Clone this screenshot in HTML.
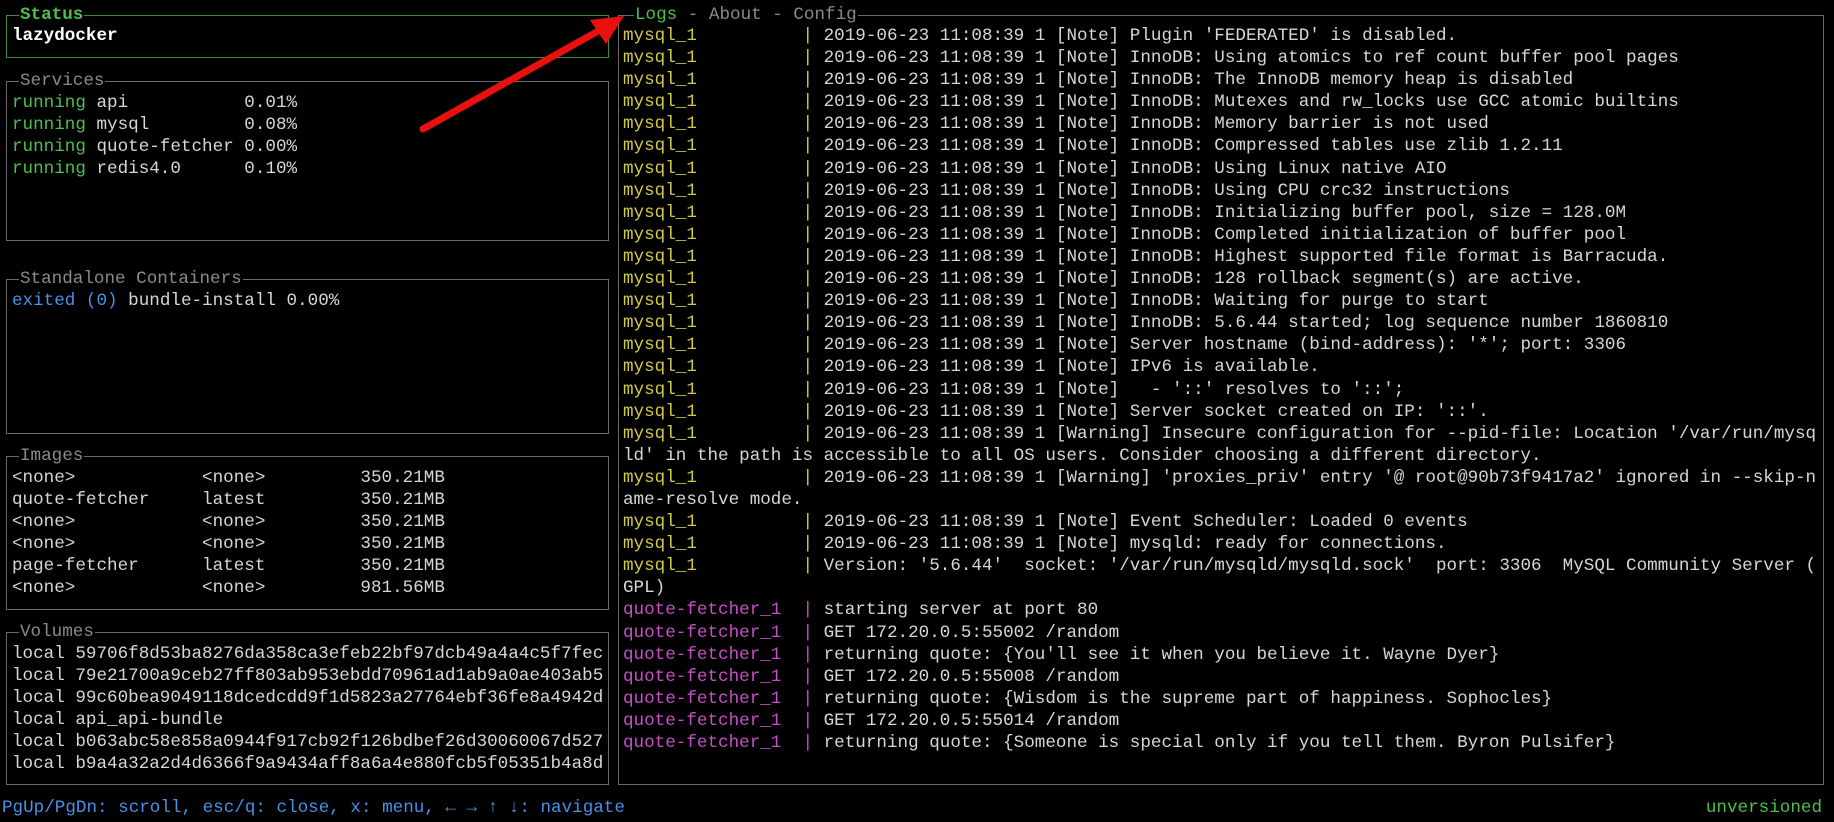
<!DOCTYPE html>
<html><head><meta charset="utf-8"><style>
html,body{margin:0;padding:0;background:#000;width:1834px;height:822px;overflow:hidden}
body{position:relative;font-family:"Liberation Mono","DejaVu Sans Mono",monospace;font-size:17.6px;color:#d6d6d6}
.box{position:absolute;border:1.5px solid #6a6a6a;box-sizing:border-box}
.t{position:absolute;top:-12px;left:12px;background:#000;line-height:22px;color:#8a8a8a;padding:0 1px}
pre{margin:0;font:inherit;line-height:22.1px;white-space:pre;position:absolute}
.g{color:#4cbf4c}.y{color:#d2c848}.m{color:#c84fc8}.b{color:#4a8fe8}.w{color:#fff;font-weight:bold}
</style></head><body>
<div class="box" style="left:6px;top:15px;width:603px;height:43px;border-color:#3f8a3f"><span class="t g" style="font-weight:bold">Status</span>
<pre class="w" style="left:5px;top:9px">lazydocker</pre></div>
<div class="box" style="left:6px;top:81px;width:603px;height:160px"><span class="t">Services</span>
<pre style="left:5px;top:10px"><span class="g">running</span> api           0.01%
<span class="g">running</span> mysql         0.08%
<span class="g">running</span> quote-fetcher 0.00%
<span class="g">running</span> redis4.0      0.10%</pre></div>
<div class="box" style="left:6px;top:279px;width:603px;height:155px"><span class="t">Standalone Containers</span>
<pre style="left:5px;top:10px"><span class="b">exited (0)</span> bundle-install 0.00%</pre></div>
<div class="box" style="left:6px;top:456px;width:603px;height:154px"><span class="t">Images</span>
<pre style="left:5px;top:10px">&lt;none&gt;            &lt;none&gt;         350.21MB
quote-fetcher     latest         350.21MB
&lt;none&gt;            &lt;none&gt;         350.21MB
&lt;none&gt;            &lt;none&gt;         350.21MB
page-fetcher      latest         350.21MB
&lt;none&gt;            &lt;none&gt;         981.56MB</pre></div>
<div class="box" style="left:6px;top:632px;width:603px;height:153px"><span class="t">Volumes</span>
<pre style="left:5px;top:10px">local 59706f8d53ba8276da358ca3efeb22bf97dcb49a4a4c5f7fec
local 79e21700a9ceb27ff803ab953ebdd70961ad1ab9a0ae403ab5
local 99c60bea9049118dcedcdd9f1d5823a27764ebf36fe8a4942d
local api_api-bundle
local b063abc58e858a0944f917cb92f126bdbef26d30060067d527
local b9a4a32a2d4d6366f9a9434aff8a6a4e880fcb5f05351b4a8d</pre></div>
<div class="box" style="left:618px;top:15px;width:1206px;height:770px"><span class="t" style="left:15px"><span class="g">Logs</span> - About - Config</span>
<pre style="left:4px;top:9px"><span class="y">mysql_1</span>          <span class="y">|</span> 2019-06-23 11:08:39 1 [Note] Plugin 'FEDERATED' is disabled.
<span class="y">mysql_1</span>          <span class="y">|</span> 2019-06-23 11:08:39 1 [Note] InnoDB: Using atomics to ref count buffer pool pages
<span class="y">mysql_1</span>          <span class="y">|</span> 2019-06-23 11:08:39 1 [Note] InnoDB: The InnoDB memory heap is disabled
<span class="y">mysql_1</span>          <span class="y">|</span> 2019-06-23 11:08:39 1 [Note] InnoDB: Mutexes and rw_locks use GCC atomic builtins
<span class="y">mysql_1</span>          <span class="y">|</span> 2019-06-23 11:08:39 1 [Note] InnoDB: Memory barrier is not used
<span class="y">mysql_1</span>          <span class="y">|</span> 2019-06-23 11:08:39 1 [Note] InnoDB: Compressed tables use zlib 1.2.11
<span class="y">mysql_1</span>          <span class="y">|</span> 2019-06-23 11:08:39 1 [Note] InnoDB: Using Linux native AIO
<span class="y">mysql_1</span>          <span class="y">|</span> 2019-06-23 11:08:39 1 [Note] InnoDB: Using CPU crc32 instructions
<span class="y">mysql_1</span>          <span class="y">|</span> 2019-06-23 11:08:39 1 [Note] InnoDB: Initializing buffer pool, size = 128.0M
<span class="y">mysql_1</span>          <span class="y">|</span> 2019-06-23 11:08:39 1 [Note] InnoDB: Completed initialization of buffer pool
<span class="y">mysql_1</span>          <span class="y">|</span> 2019-06-23 11:08:39 1 [Note] InnoDB: Highest supported file format is Barracuda.
<span class="y">mysql_1</span>          <span class="y">|</span> 2019-06-23 11:08:39 1 [Note] InnoDB: 128 rollback segment(s) are active.
<span class="y">mysql_1</span>          <span class="y">|</span> 2019-06-23 11:08:39 1 [Note] InnoDB: Waiting for purge to start
<span class="y">mysql_1</span>          <span class="y">|</span> 2019-06-23 11:08:39 1 [Note] InnoDB: 5.6.44 started; log sequence number 1860810
<span class="y">mysql_1</span>          <span class="y">|</span> 2019-06-23 11:08:39 1 [Note] Server hostname (bind-address): '*'; port: 3306
<span class="y">mysql_1</span>          <span class="y">|</span> 2019-06-23 11:08:39 1 [Note] IPv6 is available.
<span class="y">mysql_1</span>          <span class="y">|</span> 2019-06-23 11:08:39 1 [Note]   - '::' resolves to '::';
<span class="y">mysql_1</span>          <span class="y">|</span> 2019-06-23 11:08:39 1 [Note] Server socket created on IP: '::'.
<span class="y">mysql_1</span>          <span class="y">|</span> 2019-06-23 11:08:39 1 [Warning] Insecure configuration for --pid-file: Location '/var/run/mysq
ld' in the path is accessible to all OS users. Consider choosing a different directory.
<span class="y">mysql_1</span>          <span class="y">|</span> 2019-06-23 11:08:39 1 [Warning] 'proxies_priv' entry '@ root@90b73f9417a2' ignored in --skip-n
ame-resolve mode.
<span class="y">mysql_1</span>          <span class="y">|</span> 2019-06-23 11:08:39 1 [Note] Event Scheduler: Loaded 0 events
<span class="y">mysql_1</span>          <span class="y">|</span> 2019-06-23 11:08:39 1 [Note] mysqld: ready for connections.
<span class="y">mysql_1</span>          <span class="y">|</span> Version: '5.6.44'  socket: '/var/run/mysqld/mysqld.sock'  port: 3306  MySQL Community Server (
GPL)
<span class="m">quote-fetcher_1</span>  <span class="m">|</span> starting server at port 80
<span class="m">quote-fetcher_1</span>  <span class="m">|</span> GET 172.20.0.5:55002 /random
<span class="m">quote-fetcher_1</span>  <span class="m">|</span> returning quote: {You'll see it when you believe it. Wayne Dyer}
<span class="m">quote-fetcher_1</span>  <span class="m">|</span> GET 172.20.0.5:55008 /random
<span class="m">quote-fetcher_1</span>  <span class="m">|</span> returning quote: {Wisdom is the supreme part of happiness. Sophocles}
<span class="m">quote-fetcher_1</span>  <span class="m">|</span> GET 172.20.0.5:55014 /random
<span class="m">quote-fetcher_1</span>  <span class="m">|</span> returning quote: {Someone is special only if you tell them. Byron Pulsifer}</pre></div>
<pre class="b" style="left:2px;top:797px">PgUp/PgDn: scroll, esc/q: close, x: menu, ← → ↑ ↓: navigate</pre>
<pre class="g" style="right:12px;top:797px">unversioned</pre>
<svg style="position:absolute;left:0;top:0" width="1834" height="822">
<line x1="423" y1="129" x2="600" y2="30" stroke="#e8110f" stroke-width="7" stroke-linecap="round"/>
<polygon points="624,16 590,20 606,44" fill="#e8110f"/>
</svg>
</body></html>
